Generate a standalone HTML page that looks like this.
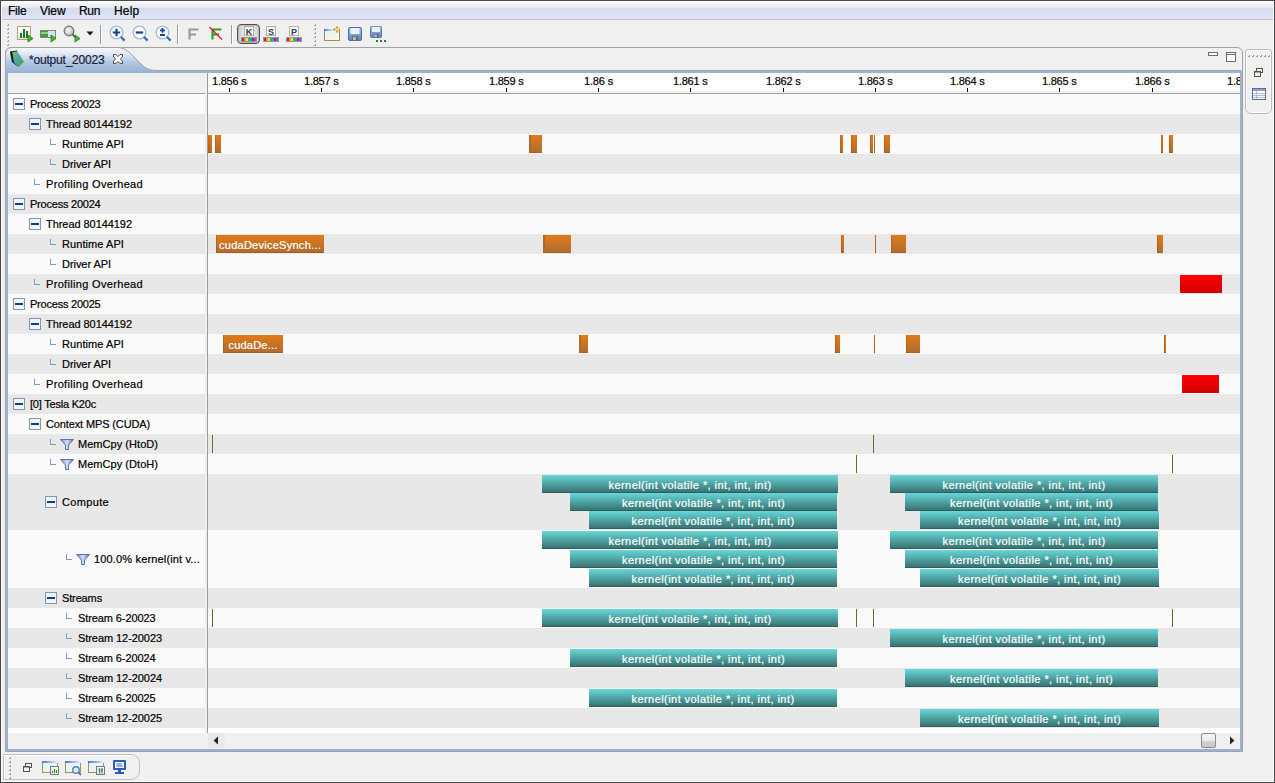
<!DOCTYPE html><html><head><meta charset="utf-8"><style>body{margin:0;width:1275px;height:783px;overflow:hidden;position:relative;font-family:"Liberation Sans",sans-serif}</style></head><body><div style="position:absolute;left:0px;top:0px;width:1275px;height:783px;background:#f0f0f0;"></div><div style="position:absolute;left:1px;top:1px;width:1273px;height:18px;background:linear-gradient(to bottom,#fefefe 0px,#f5f6fa 2px,#e9ecf6 6px,#d6dcee 7.5px,#d8deef 10px,#e0e6f6 18px);"></div><div style="position:absolute;left:1px;top:19px;width:1273px;height:1px;background:#b9c0d4;"></div><div style="position:absolute;left:1px;top:20px;width:1273px;height:1px;background:#f4f4f4;"></div><div style="position:absolute;left:0;top:0;width:1275px;height:783px;box-sizing:border-box;border:1px solid #474747;box-shadow:inset 0 0 0 1px #fcfcfc;pointer-events:none;z-index:50"></div><div style="position:absolute;left:7px;top:24px;width:2px;height:2px;background:linear-gradient(135deg,#fff 0 40%,#a8a8a8 40%)"></div><div style="position:absolute;left:7px;top:28px;width:2px;height:2px;background:linear-gradient(135deg,#fff 0 40%,#a8a8a8 40%)"></div><div style="position:absolute;left:7px;top:32px;width:2px;height:2px;background:linear-gradient(135deg,#fff 0 40%,#a8a8a8 40%)"></div><div style="position:absolute;left:7px;top:36px;width:2px;height:2px;background:linear-gradient(135deg,#fff 0 40%,#a8a8a8 40%)"></div><div style="position:absolute;left:7px;top:40px;width:2px;height:2px;background:linear-gradient(135deg,#fff 0 40%,#a8a8a8 40%)"></div><div style="position:absolute;left:7px;top:44px;width:2px;height:2px;background:linear-gradient(135deg,#fff 0 40%,#a8a8a8 40%)"></div><div style="position:absolute;left:314px;top:24px;width:2px;height:2px;background:linear-gradient(135deg,#fff 0 40%,#a8a8a8 40%)"></div><div style="position:absolute;left:314px;top:28px;width:2px;height:2px;background:linear-gradient(135deg,#fff 0 40%,#a8a8a8 40%)"></div><div style="position:absolute;left:314px;top:32px;width:2px;height:2px;background:linear-gradient(135deg,#fff 0 40%,#a8a8a8 40%)"></div><div style="position:absolute;left:314px;top:36px;width:2px;height:2px;background:linear-gradient(135deg,#fff 0 40%,#a8a8a8 40%)"></div><div style="position:absolute;left:314px;top:40px;width:2px;height:2px;background:linear-gradient(135deg,#fff 0 40%,#a8a8a8 40%)"></div><div style="position:absolute;left:314px;top:44px;width:2px;height:2px;background:linear-gradient(135deg,#fff 0 40%,#a8a8a8 40%)"></div><svg style="position:absolute;left:16px;top:25px" width="20" height="20" viewBox="0 0 20 20"><defs><linearGradient id="gw" x1="0" y1="0" x2="0" y2="1"><stop offset="0" stop-color="#fff"/><stop offset="1" stop-color="#dceaf6"/></linearGradient></defs><rect x="1.5" y="1.5" width="13" height="13" fill="url(#gw)" stroke="#b9a271"/><rect x="4" y="8" width="2" height="5" fill="#1f7a2a"/><rect x="7" y="4" width="2" height="9" fill="#1f7a2a"/><rect x="10" y="6" width="2" height="7" fill="#1f7a2a"/><path d="M12 10v7l5-3.5z" fill="#3fbf2a" stroke="#1f7a10" stroke-width="0.8"/></svg><svg style="position:absolute;left:39px;top:25px" width="20" height="20" viewBox="0 0 20 20"><rect x="1.5" y="5.5" width="15" height="7" fill="#cfe6f5" stroke="#8c8070"/><rect x="2" y="6" width="7" height="6" fill="#3da040"/><rect x="2" y="7" width="7" height="2" fill="#8fd08f"/><path d="M12 10v7l5-3.5z" fill="#3fbf2a" stroke="#1f7a10" stroke-width="0.8"/></svg><svg style="position:absolute;left:63px;top:25px" width="22" height="20" viewBox="0 0 22 20"><defs><radialGradient id="gm" cx="0.4" cy="0.4" r="0.6"><stop offset="0" stop-color="#fafafa"/><stop offset="1" stop-color="#b8b8b8"/></radialGradient></defs><circle cx="6" cy="6" r="4.8" fill="url(#gm)" stroke="#707070" stroke-width="1.2"/><path d="M9.5 9.5l3 3" stroke="#404040" stroke-width="1.6"/><path d="M12 10v7l5-3.5z" fill="#3fbf2a" stroke="#1f7a10" stroke-width="0.8"/></svg><svg style="position:absolute;left:86px;top:31px" width="9" height="6" viewBox="0 0 9 6"><path d="M0.5 0.5h7l-3.5 4z" fill="#1a1a1a"/></svg><div style="position:absolute;left:100px;top:25px;width:1px;height:19px;background:#9a9a9a;"></div><div style="position:absolute;left:101px;top:25px;width:1px;height:19px;background:#fff;"></div><div style="position:absolute;left:177px;top:25px;width:1px;height:19px;background:#9a9a9a;"></div><div style="position:absolute;left:178px;top:25px;width:1px;height:19px;background:#fff;"></div><div style="position:absolute;left:231px;top:25px;width:1px;height:19px;background:#9a9a9a;"></div><div style="position:absolute;left:232px;top:25px;width:1px;height:19px;background:#fff;"></div><svg style="position:absolute;left:109px;top:25px" width="19" height="19" viewBox="0 0 19 19"><circle cx="7.5" cy="7.5" r="6.3" fill="#fff" stroke="#98bce0" stroke-width="1.3"/><path d="M11.8 11.8l3.8 3.8" stroke="#3a6aa8" stroke-width="2.2"/><path d="M3.8 7.5h7.4M7.5 3.8v7.4" stroke="#1c3f8c" stroke-width="2.2"/></svg><svg style="position:absolute;left:132px;top:25px" width="19" height="19" viewBox="0 0 19 19"><circle cx="7.5" cy="7.5" r="6.3" fill="#fff" stroke="#98bce0" stroke-width="1.3"/><path d="M11.8 11.8l3.8 3.8" stroke="#3a6aa8" stroke-width="2.2"/><path d="M3.8 7.5h7.4" stroke="#1c3f8c" stroke-width="2.2"/></svg><svg style="position:absolute;left:155px;top:25px" width="19" height="19" viewBox="0 0 19 19"><circle cx="7.5" cy="7.5" r="6.3" fill="#fff" stroke="#98bce0" stroke-width="1.3"/><path d="M11.8 11.8l3.8 3.8" stroke="#3a6aa8" stroke-width="2.2"/><path d="M5 5.3h5M7.5 2.9v4.8M5 10h5" stroke="#1c3f8c" stroke-width="1.8"/></svg><svg style="position:absolute;left:187px;top:26px" width="14" height="16" viewBox="0 0 14 16"><path d="M2.5 13.5V3.5h9M2.5 8.5h6.5" stroke="#9a9a9a" stroke-width="2.1" fill="none"/></svg><svg style="position:absolute;left:208px;top:25px" width="16" height="17" viewBox="0 0 16 17"><path d="M4.5 14.5V4.5h9M4.5 9.5h6.5" stroke="#2f9a2f" stroke-width="2.1" fill="none"/><path d="M1.5 2l12.5 12.5" stroke="#e81818" stroke-width="1.3"/></svg><div style="position:absolute;left:237px;top:24px;width:21px;height:18px;border:1px solid #505050;border-radius:4px;background:linear-gradient(90deg,#c8c8c8,#e8e8e8 30%,#e8e8e8 70%,#d0d0d0);box-shadow:inset 0 0 0 1px #b8b8b8"></div><svg style="position:absolute;left:240px;top:25px" width="18" height="18" viewBox="0 0 18 18"><rect x="4.5" y="1.5" width="9" height="9" fill="#f6f9fd" stroke="#c4b07a"/><text x="9" y="9.5" text-anchor="middle" font-family="Liberation Sans" font-weight="bold" font-size="9" fill="#1c3a8a">K</text><rect x="1" y="12" width="16" height="5" fill="#8a96b4"/><rect x="2" y="13" width="2" height="3" fill="#e8151b"/><rect x="4" y="13" width="2" height="3" fill="#f7941d"/><rect x="6" y="13" width="2" height="3" fill="#fff200"/><rect x="8" y="13" width="2" height="3" fill="#39b54a"/><rect x="10" y="13" width="2" height="3" fill="#00aeef"/><rect x="12" y="13" width="2" height="3" fill="#d0106a"/><rect x="14" y="13" width="2" height="3" fill="#8e5cb0"/></svg><svg style="position:absolute;left:262px;top:25px" width="18" height="18" viewBox="0 0 18 18"><rect x="4.5" y="1.5" width="9" height="9" fill="#f6f9fd" stroke="#c4b07a"/><text x="9" y="9.5" text-anchor="middle" font-family="Liberation Sans" font-weight="bold" font-size="9" fill="#1c3a8a">S</text><rect x="1" y="12" width="16" height="5" fill="#8a96b4"/><rect x="2" y="13" width="2" height="3" fill="#e8151b"/><rect x="4" y="13" width="2" height="3" fill="#f7941d"/><rect x="6" y="13" width="2" height="3" fill="#fff200"/><rect x="8" y="13" width="2" height="3" fill="#39b54a"/><rect x="10" y="13" width="2" height="3" fill="#00aeef"/><rect x="12" y="13" width="2" height="3" fill="#d0106a"/><rect x="14" y="13" width="2" height="3" fill="#8e5cb0"/></svg><svg style="position:absolute;left:285px;top:25px" width="18" height="18" viewBox="0 0 18 18"><rect x="4.5" y="1.5" width="9" height="9" fill="#f6f9fd" stroke="#c4b07a"/><text x="9" y="9.5" text-anchor="middle" font-family="Liberation Sans" font-weight="bold" font-size="9" fill="#1c3a8a">P</text><rect x="1" y="12" width="16" height="5" fill="#8a96b4"/><rect x="2" y="13" width="2" height="3" fill="#e8151b"/><rect x="4" y="13" width="2" height="3" fill="#f7941d"/><rect x="6" y="13" width="2" height="3" fill="#fff200"/><rect x="8" y="13" width="2" height="3" fill="#39b54a"/><rect x="10" y="13" width="2" height="3" fill="#00aeef"/><rect x="12" y="13" width="2" height="3" fill="#d0106a"/><rect x="14" y="13" width="2" height="3" fill="#8e5cb0"/></svg><svg style="position:absolute;left:323px;top:25px" width="20" height="18" viewBox="0 0 20 18"><defs><linearGradient id="gnw" x1="0" y1="0" x2="1" y2="1"><stop offset="0" stop-color="#dff0fb"/><stop offset="1" stop-color="#fffbe0"/></linearGradient><linearGradient id="gbt" x1="0" y1="0" x2="1" y2="0"><stop offset="0" stop-color="#3a7bd0"/><stop offset="1" stop-color="#e0ecf8"/></linearGradient></defs><rect x="1.5" y="4.5" width="15" height="11" fill="url(#gnw)" stroke="#a08a50"/><rect x="1" y="4" width="9" height="2" fill="url(#gbt)"/><path d="M14 1.5v6M11 4.5h6" stroke="#c09020" stroke-width="2"/><path d="M14 2.5v4M12 4.5h4" stroke="#fff2b0" stroke-width="0.9"/></svg><svg style="position:absolute;left:348px;top:27px" width="14" height="14" viewBox="0 0 14 14"><defs><linearGradient id="gsv" x1="0" y1="0" x2="0" y2="1"><stop offset="0" stop-color="#a9c2e6"/><stop offset="1" stop-color="#5a82c0"/></linearGradient></defs><rect x="0.5" y="0.5" width="13" height="13" rx="1.5" fill="url(#gsv)" stroke="#4a6eae"/><rect x="2.5" y="1" width="9" height="6" fill="#eef3fb"/><rect x="4" y="9" width="6" height="5" fill="#5d6f8c"/><rect x="5" y="10" width="3" height="3" fill="#c8b88a"/></svg><svg style="position:absolute;left:370px;top:26px" width="12" height="12" viewBox="0 0 14 14"><defs><linearGradient id="gsv" x1="0" y1="0" x2="0" y2="1"><stop offset="0" stop-color="#a9c2e6"/><stop offset="1" stop-color="#5a82c0"/></linearGradient></defs><rect x="0.5" y="0.5" width="13" height="13" rx="1.5" fill="url(#gsv)" stroke="#4a6eae"/><rect x="2.5" y="1" width="9" height="6" fill="#eef3fb"/><rect x="4" y="9" width="6" height="5" fill="#5d6f8c"/><rect x="5" y="10" width="3" height="3" fill="#c8b88a"/></svg><div style="position:absolute;left:376px;top:40px;width:2px;height:2px;background:#118a11;"></div><div style="position:absolute;left:380px;top:40px;width:2px;height:2px;background:#118a11;"></div><div style="position:absolute;left:384px;top:40px;width:2px;height:2px;background:#118a11;"></div><div style="position:absolute;left:5px;top:47px;width:1236px;height:703px;border:1px solid #a3a3a3;border-radius:6px 6px 0 0;background:#f0f0f0"></div><svg style="position:absolute;left:5px;top:47px" width="160" height="26" viewBox="0 0 160 26"><defs><linearGradient id="gtab" x1="0" y1="0" x2="0" y2="1"><stop offset="0" stop-color="#f6f8fc"/><stop offset="0.25" stop-color="#dfe8f3"/><stop offset="0.6" stop-color="#b0c6e0"/><stop offset="1" stop-color="#98b3d6"/></linearGradient></defs><path d="M0.5 26V7.5Q0.5 0.5 7.5 0.5H114Q119 0.5 124 5L136 17Q142 23.5 151 23.5H160V26Z" fill="url(#gtab)" stroke="#a3a3a3" stroke-width="1"/></svg><div style="position:absolute;left:160px;top:70px;width:1081px;height:1px;background:#a3a3a3;"></div><div style="position:absolute;left:6px;top:71px;width:1235px;height:2px;background:#98b3d6;"></div><div style="position:absolute;left:6px;top:71px;width:2px;height:680px;background:#98b3d6;"></div><div style="position:absolute;left:1240px;top:71px;width:2px;height:680px;background:#98b3d6;"></div><div style="position:absolute;left:6px;top:749px;width:1235px;height:2px;background:#98b3d6;"></div><svg style="position:absolute;left:8px;top:49px" width="18" height="20" viewBox="0 0 18 20"><defs><linearGradient id="gti" x1="0" y1="0" x2="1" y2="1"><stop offset="0" stop-color="#9ab83a"/><stop offset="0.5" stop-color="#4aa8b8"/><stop offset="1" stop-color="#5a9a20"/></linearGradient></defs><path d="M2 3L9 2L16 13L10.5 18L4 13Z" fill="url(#gti)"/><path d="M2 3L4 2.5L6 13.5L10.5 18L4 13Z" fill="#0a1a20"/><path d="M2 3L9 2" stroke="#203028" stroke-width="1"/></svg><svg style="position:absolute;left:112px;top:53px" width="12" height="12" viewBox="0 0 12 12"><path d="M1.5 1.5H4L6 3.6L8 1.5H10.5V4L8.4 6L10.5 8V10.5H8L6 8.4L4 10.5H1.5V8L3.6 6L1.5 4Z" fill="#fff" stroke="#4a4a4a" stroke-width="1"/></svg><div style="position:absolute;left:1208px;top:52px;width:8px;height:2px;border:1px solid #6e6e6e;background:#fff"></div><div style="position:absolute;left:1226px;top:52px;width:8px;height:8px;border:1px solid #6e6e6e;background:#fff"></div><div style="position:absolute;left:1227px;top:54px;width:8px;height:1px;background:#6e6e6e;"></div><div style="position:absolute;left:1245px;top:49px;width:25px;height:63px;border:1px solid #bcbcbc;border-radius:3px 3px 6px 6px;box-shadow:inset 0 0 0 1px #fcfcfc"></div><div style="position:absolute;left:1248px;top:55px;width:2px;height:2px;background:linear-gradient(135deg,transparent 0 45%,#a0a0a0 45%)"></div><div style="position:absolute;left:1252px;top:55px;width:2px;height:2px;background:linear-gradient(135deg,transparent 0 45%,#a0a0a0 45%)"></div><div style="position:absolute;left:1256px;top:55px;width:2px;height:2px;background:linear-gradient(135deg,transparent 0 45%,#a0a0a0 45%)"></div><div style="position:absolute;left:1260px;top:55px;width:2px;height:2px;background:linear-gradient(135deg,transparent 0 45%,#a0a0a0 45%)"></div><div style="position:absolute;left:1264px;top:55px;width:2px;height:2px;background:linear-gradient(135deg,transparent 0 45%,#a0a0a0 45%)"></div><div style="position:absolute;left:1268px;top:55px;width:2px;height:2px;background:linear-gradient(135deg,transparent 0 45%,#a0a0a0 45%)"></div><svg style="position:absolute;left:1254px;top:68px" width="9" height="9" viewBox="0 0 9 9"><rect x="2.5" y="0.5" width="6" height="4" fill="#f0f0f0" stroke="#5a5046"/><rect x="0.5" y="3.5" width="6" height="5" fill="#f0f0f0" stroke="#5a5046" stroke-width="1"/><path d="M1 4h5" stroke="#5a5046" stroke-width="1"/></svg><svg style="position:absolute;left:1252px;top:88px" width="14" height="12" viewBox="0 0 14 12"><rect x="0.5" y="0.5" width="13" height="11" fill="#fff" stroke="#5a6e96"/><rect x="1" y="1" width="12" height="2" fill="#8ea2c4"/><path d="M1 5.5h12M1 7.5h12M1 9.5h12M4.5 3v8" stroke="#b0bdd6" stroke-width="1"/></svg><div style="position:absolute;left:8px;top:73px;width:197px;height:20px;background:#f0f0f0;"></div><div style="position:absolute;left:205px;top:73px;width:2px;height:660px;background:#f0f0f0;"></div><div style="position:absolute;left:207px;top:73px;width:1px;height:660px;background:#9c9c9c;"></div><div style="position:absolute;left:208px;top:73px;width:1032px;height:19px;background:#fff;"></div><div style="position:absolute;left:208px;top:91px;width:1032px;height:1px;background:#f0f0f0;"></div><div style="position:absolute;left:8px;top:93px;width:197px;height:1px;background:#a0a0a0;"></div><div style="position:absolute;left:208px;top:93px;width:1032px;height:1px;background:#a0a0a0;"></div><div style="position:absolute;left:229px;top:88px;width:1px;height:4px;background:#000;"></div><div style="position:absolute;left:321px;top:88px;width:1px;height:4px;background:#000;"></div><div style="position:absolute;left:413px;top:88px;width:1px;height:4px;background:#000;"></div><div style="position:absolute;left:506px;top:88px;width:1px;height:4px;background:#000;"></div><div style="position:absolute;left:598px;top:88px;width:1px;height:4px;background:#000;"></div><div style="position:absolute;left:690px;top:88px;width:1px;height:4px;background:#000;"></div><div style="position:absolute;left:783px;top:88px;width:1px;height:4px;background:#000;"></div><div style="position:absolute;left:875px;top:88px;width:1px;height:4px;background:#000;"></div><div style="position:absolute;left:967px;top:88px;width:1px;height:4px;background:#000;"></div><div style="position:absolute;left:1059px;top:88px;width:1px;height:4px;background:#000;"></div><div style="position:absolute;left:1152px;top:88px;width:1px;height:4px;background:#000;"></div><div style="position:absolute;left:8px;top:94px;width:197px;height:20px;background:#fafafa;"></div><div style="position:absolute;left:208px;top:94px;width:1032px;height:20px;background:#fafafa;"></div><div style="position:absolute;left:13px;top:98px;width:10px;height:10px;border:1px solid #8794ac;background:#eaf9fe"></div><div style="position:absolute;left:15px;top:103px;width:8px;height:2px;background:#1f3b88;"></div><div style="position:absolute;left:8px;top:114px;width:197px;height:20px;background:#e8e8e8;"></div><div style="position:absolute;left:208px;top:114px;width:1032px;height:20px;background:#e8e8e8;"></div><div style="position:absolute;left:29px;top:118px;width:10px;height:10px;border:1px solid #8794ac;background:#eaf9fe"></div><div style="position:absolute;left:31px;top:123px;width:8px;height:2px;background:#1f3b88;"></div><div style="position:absolute;left:8px;top:134px;width:197px;height:20px;background:#fafafa;"></div><div style="position:absolute;left:208px;top:134px;width:1032px;height:20px;background:#fafafa;"></div><div style="position:absolute;left:50px;top:139px;width:1px;height:6px;background:#8a9ab4;"></div><div style="position:absolute;left:51px;top:144px;width:5px;height:1px;background:#8a9ab4;"></div><div style="position:absolute;left:8px;top:154px;width:197px;height:20px;background:#e8e8e8;"></div><div style="position:absolute;left:208px;top:154px;width:1032px;height:20px;background:#e8e8e8;"></div><div style="position:absolute;left:50px;top:159px;width:1px;height:6px;background:#8a9ab4;"></div><div style="position:absolute;left:51px;top:164px;width:5px;height:1px;background:#8a9ab4;"></div><div style="position:absolute;left:8px;top:174px;width:197px;height:20px;background:#fafafa;"></div><div style="position:absolute;left:208px;top:174px;width:1032px;height:20px;background:#fafafa;"></div><div style="position:absolute;left:34px;top:179px;width:1px;height:6px;background:#8a9ab4;"></div><div style="position:absolute;left:35px;top:184px;width:5px;height:1px;background:#8a9ab4;"></div><div style="position:absolute;left:8px;top:194px;width:197px;height:20px;background:#e8e8e8;"></div><div style="position:absolute;left:208px;top:194px;width:1032px;height:20px;background:#e8e8e8;"></div><div style="position:absolute;left:13px;top:198px;width:10px;height:10px;border:1px solid #8794ac;background:#eaf9fe"></div><div style="position:absolute;left:15px;top:203px;width:8px;height:2px;background:#1f3b88;"></div><div style="position:absolute;left:8px;top:214px;width:197px;height:20px;background:#fafafa;"></div><div style="position:absolute;left:208px;top:214px;width:1032px;height:20px;background:#fafafa;"></div><div style="position:absolute;left:29px;top:218px;width:10px;height:10px;border:1px solid #8794ac;background:#eaf9fe"></div><div style="position:absolute;left:31px;top:223px;width:8px;height:2px;background:#1f3b88;"></div><div style="position:absolute;left:8px;top:234px;width:197px;height:20px;background:#e8e8e8;"></div><div style="position:absolute;left:208px;top:234px;width:1032px;height:20px;background:#e8e8e8;"></div><div style="position:absolute;left:50px;top:239px;width:1px;height:6px;background:#8a9ab4;"></div><div style="position:absolute;left:51px;top:244px;width:5px;height:1px;background:#8a9ab4;"></div><div style="position:absolute;left:8px;top:254px;width:197px;height:20px;background:#fafafa;"></div><div style="position:absolute;left:208px;top:254px;width:1032px;height:20px;background:#fafafa;"></div><div style="position:absolute;left:50px;top:259px;width:1px;height:6px;background:#8a9ab4;"></div><div style="position:absolute;left:51px;top:264px;width:5px;height:1px;background:#8a9ab4;"></div><div style="position:absolute;left:8px;top:274px;width:197px;height:20px;background:#e8e8e8;"></div><div style="position:absolute;left:208px;top:274px;width:1032px;height:20px;background:#e8e8e8;"></div><div style="position:absolute;left:34px;top:279px;width:1px;height:6px;background:#8a9ab4;"></div><div style="position:absolute;left:35px;top:284px;width:5px;height:1px;background:#8a9ab4;"></div><div style="position:absolute;left:8px;top:294px;width:197px;height:20px;background:#fafafa;"></div><div style="position:absolute;left:208px;top:294px;width:1032px;height:20px;background:#fafafa;"></div><div style="position:absolute;left:13px;top:298px;width:10px;height:10px;border:1px solid #8794ac;background:#eaf9fe"></div><div style="position:absolute;left:15px;top:303px;width:8px;height:2px;background:#1f3b88;"></div><div style="position:absolute;left:8px;top:314px;width:197px;height:20px;background:#e8e8e8;"></div><div style="position:absolute;left:208px;top:314px;width:1032px;height:20px;background:#e8e8e8;"></div><div style="position:absolute;left:29px;top:318px;width:10px;height:10px;border:1px solid #8794ac;background:#eaf9fe"></div><div style="position:absolute;left:31px;top:323px;width:8px;height:2px;background:#1f3b88;"></div><div style="position:absolute;left:8px;top:334px;width:197px;height:20px;background:#fafafa;"></div><div style="position:absolute;left:208px;top:334px;width:1032px;height:20px;background:#fafafa;"></div><div style="position:absolute;left:50px;top:339px;width:1px;height:6px;background:#8a9ab4;"></div><div style="position:absolute;left:51px;top:344px;width:5px;height:1px;background:#8a9ab4;"></div><div style="position:absolute;left:8px;top:354px;width:197px;height:20px;background:#e8e8e8;"></div><div style="position:absolute;left:208px;top:354px;width:1032px;height:20px;background:#e8e8e8;"></div><div style="position:absolute;left:50px;top:359px;width:1px;height:6px;background:#8a9ab4;"></div><div style="position:absolute;left:51px;top:364px;width:5px;height:1px;background:#8a9ab4;"></div><div style="position:absolute;left:8px;top:374px;width:197px;height:20px;background:#fafafa;"></div><div style="position:absolute;left:208px;top:374px;width:1032px;height:20px;background:#fafafa;"></div><div style="position:absolute;left:34px;top:379px;width:1px;height:6px;background:#8a9ab4;"></div><div style="position:absolute;left:35px;top:384px;width:5px;height:1px;background:#8a9ab4;"></div><div style="position:absolute;left:8px;top:394px;width:197px;height:20px;background:#e8e8e8;"></div><div style="position:absolute;left:208px;top:394px;width:1032px;height:20px;background:#e8e8e8;"></div><div style="position:absolute;left:13px;top:398px;width:10px;height:10px;border:1px solid #8794ac;background:#eaf9fe"></div><div style="position:absolute;left:15px;top:403px;width:8px;height:2px;background:#1f3b88;"></div><div style="position:absolute;left:8px;top:414px;width:197px;height:20px;background:#fafafa;"></div><div style="position:absolute;left:208px;top:414px;width:1032px;height:20px;background:#fafafa;"></div><div style="position:absolute;left:29px;top:418px;width:10px;height:10px;border:1px solid #8794ac;background:#eaf9fe"></div><div style="position:absolute;left:31px;top:423px;width:8px;height:2px;background:#1f3b88;"></div><div style="position:absolute;left:8px;top:434px;width:197px;height:20px;background:#e8e8e8;"></div><div style="position:absolute;left:208px;top:434px;width:1032px;height:20px;background:#e8e8e8;"></div><div style="position:absolute;left:50px;top:439px;width:1px;height:6px;background:#8a9ab4;"></div><div style="position:absolute;left:51px;top:444px;width:5px;height:1px;background:#8a9ab4;"></div><svg style="position:absolute;left:60px;top:439px" width="14" height="11" viewBox="0 0 14 11"><defs><linearGradient id="gf" x1="0" y1="0" x2="1" y2="0"><stop offset="0" stop-color="#6a88c0"/><stop offset="0.5" stop-color="#d4e0f4"/><stop offset="1" stop-color="#5070b0"/></linearGradient></defs><path d="M0.5 0.5H13.5L8.5 6V10.5H5.5V6Z" fill="url(#gf)" stroke="#5874a8" stroke-width="1"/></svg><div style="position:absolute;left:8px;top:454px;width:197px;height:20px;background:#fafafa;"></div><div style="position:absolute;left:208px;top:454px;width:1032px;height:20px;background:#fafafa;"></div><div style="position:absolute;left:50px;top:459px;width:1px;height:6px;background:#8a9ab4;"></div><div style="position:absolute;left:51px;top:464px;width:5px;height:1px;background:#8a9ab4;"></div><svg style="position:absolute;left:60px;top:459px" width="14" height="11" viewBox="0 0 14 11"><defs><linearGradient id="gf" x1="0" y1="0" x2="1" y2="0"><stop offset="0" stop-color="#6a88c0"/><stop offset="0.5" stop-color="#d4e0f4"/><stop offset="1" stop-color="#5070b0"/></linearGradient></defs><path d="M0.5 0.5H13.5L8.5 6V10.5H5.5V6Z" fill="url(#gf)" stroke="#5874a8" stroke-width="1"/></svg><div style="position:absolute;left:8px;top:474px;width:197px;height:56px;background:#e8e8e8;"></div><div style="position:absolute;left:208px;top:474px;width:1032px;height:56px;background:#e8e8e8;"></div><div style="position:absolute;left:45px;top:496px;width:10px;height:10px;border:1px solid #8794ac;background:#eaf9fe"></div><div style="position:absolute;left:47px;top:501px;width:8px;height:2px;background:#1f3b88;"></div><div style="position:absolute;left:8px;top:530px;width:197px;height:58px;background:#fafafa;"></div><div style="position:absolute;left:208px;top:530px;width:1032px;height:58px;background:#fafafa;"></div><div style="position:absolute;left:66px;top:554px;width:1px;height:6px;background:#8a9ab4;"></div><div style="position:absolute;left:67px;top:559px;width:5px;height:1px;background:#8a9ab4;"></div><svg style="position:absolute;left:76px;top:554px" width="14" height="11" viewBox="0 0 14 11"><defs><linearGradient id="gf" x1="0" y1="0" x2="1" y2="0"><stop offset="0" stop-color="#6a88c0"/><stop offset="0.5" stop-color="#d4e0f4"/><stop offset="1" stop-color="#5070b0"/></linearGradient></defs><path d="M0.5 0.5H13.5L8.5 6V10.5H5.5V6Z" fill="url(#gf)" stroke="#5874a8" stroke-width="1"/></svg><div style="position:absolute;left:8px;top:588px;width:197px;height:20px;background:#e8e8e8;"></div><div style="position:absolute;left:208px;top:588px;width:1032px;height:20px;background:#e8e8e8;"></div><div style="position:absolute;left:45px;top:592px;width:10px;height:10px;border:1px solid #8794ac;background:#eaf9fe"></div><div style="position:absolute;left:47px;top:597px;width:8px;height:2px;background:#1f3b88;"></div><div style="position:absolute;left:8px;top:608px;width:197px;height:20px;background:#fafafa;"></div><div style="position:absolute;left:208px;top:608px;width:1032px;height:20px;background:#fafafa;"></div><div style="position:absolute;left:66px;top:613px;width:1px;height:6px;background:#8a9ab4;"></div><div style="position:absolute;left:67px;top:618px;width:5px;height:1px;background:#8a9ab4;"></div><div style="position:absolute;left:8px;top:628px;width:197px;height:20px;background:#e8e8e8;"></div><div style="position:absolute;left:208px;top:628px;width:1032px;height:20px;background:#e8e8e8;"></div><div style="position:absolute;left:66px;top:633px;width:1px;height:6px;background:#8a9ab4;"></div><div style="position:absolute;left:67px;top:638px;width:5px;height:1px;background:#8a9ab4;"></div><div style="position:absolute;left:8px;top:648px;width:197px;height:20px;background:#fafafa;"></div><div style="position:absolute;left:208px;top:648px;width:1032px;height:20px;background:#fafafa;"></div><div style="position:absolute;left:66px;top:653px;width:1px;height:6px;background:#8a9ab4;"></div><div style="position:absolute;left:67px;top:658px;width:5px;height:1px;background:#8a9ab4;"></div><div style="position:absolute;left:8px;top:668px;width:197px;height:20px;background:#e8e8e8;"></div><div style="position:absolute;left:208px;top:668px;width:1032px;height:20px;background:#e8e8e8;"></div><div style="position:absolute;left:66px;top:673px;width:1px;height:6px;background:#8a9ab4;"></div><div style="position:absolute;left:67px;top:678px;width:5px;height:1px;background:#8a9ab4;"></div><div style="position:absolute;left:8px;top:688px;width:197px;height:20px;background:#fafafa;"></div><div style="position:absolute;left:208px;top:688px;width:1032px;height:20px;background:#fafafa;"></div><div style="position:absolute;left:66px;top:693px;width:1px;height:6px;background:#8a9ab4;"></div><div style="position:absolute;left:67px;top:698px;width:5px;height:1px;background:#8a9ab4;"></div><div style="position:absolute;left:8px;top:708px;width:197px;height:20px;background:#e8e8e8;"></div><div style="position:absolute;left:208px;top:708px;width:1032px;height:20px;background:#e8e8e8;"></div><div style="position:absolute;left:66px;top:713px;width:1px;height:6px;background:#8a9ab4;"></div><div style="position:absolute;left:67px;top:718px;width:5px;height:1px;background:#8a9ab4;"></div><div style="position:absolute;left:8px;top:728px;width:197px;height:5px;background:#fff;"></div><div style="position:absolute;left:208px;top:728px;width:1032px;height:5px;background:#fff;"></div><div style="position:absolute;left:8px;top:733px;width:1232px;height:16px;background:#f0f0f0;"></div><div style="position:absolute;left:208px;top:733px;width:17px;height:15px;background:#eaeaea;"></div><svg style="position:absolute;left:212px;top:736px" width="8" height="9" viewBox="0 0 8 9"><path d="M6 0.5L1.5 4.5L6 8.5z" fill="#222"/></svg><div style="position:absolute;left:1201px;top:733px;width:13px;height:13px;border:1px solid #8c8c8c;border-radius:2px;background:linear-gradient(#f6f6f6 0,#ececec 50%,#d6d6d6 50%,#c8c8c8 100%)"></div><svg style="position:absolute;left:1228px;top:736px" width="8" height="9" viewBox="0 0 8 9"><path d="M2 0.5L6.5 4.5L2 8.5z" fill="#222"/></svg><div style="position:absolute;left:208px;top:135px;width:4px;height:18px;background:linear-gradient(to bottom,#e27a17,#ad6c33);box-shadow:inset 1px 0 0 rgba(150,70,0,.3),inset -1px 0 0 rgba(230,110,0,.25),inset 0 -1px 0 rgba(150,70,0,.35);overflow:hidden"></div><div style="position:absolute;left:215px;top:135px;width:6px;height:18px;background:linear-gradient(to bottom,#e27a17,#ad6c33);box-shadow:inset 1px 0 0 rgba(150,70,0,.3),inset -1px 0 0 rgba(230,110,0,.25),inset 0 -1px 0 rgba(150,70,0,.35);overflow:hidden"></div><div style="position:absolute;left:529px;top:135px;width:13px;height:18px;background:linear-gradient(to bottom,#e27a17,#ad6c33);box-shadow:inset 1px 0 0 rgba(150,70,0,.3),inset -1px 0 0 rgba(230,110,0,.25),inset 0 -1px 0 rgba(150,70,0,.35);overflow:hidden"></div><div style="position:absolute;left:529px;top:135px;width:2px;height:18px;background:linear-gradient(#b06a28,#a86a30)"></div><div style="position:absolute;left:840px;top:135px;width:3px;height:18px;background:linear-gradient(to bottom,#e27a17,#ad6c33);box-shadow:inset 1px 0 0 rgba(150,70,0,.3),inset -1px 0 0 rgba(230,110,0,.25),inset 0 -1px 0 rgba(150,70,0,.35);overflow:hidden"></div><div style="position:absolute;left:851px;top:135px;width:6px;height:18px;background:linear-gradient(to bottom,#e27a17,#ad6c33);box-shadow:inset 1px 0 0 rgba(150,70,0,.3),inset -1px 0 0 rgba(230,110,0,.25),inset 0 -1px 0 rgba(150,70,0,.35);overflow:hidden"></div><div style="position:absolute;left:870px;top:135px;width:3px;height:18px;background:linear-gradient(to bottom,#e27a17,#ad6c33);box-shadow:inset 1px 0 0 rgba(150,70,0,.3),inset -1px 0 0 rgba(230,110,0,.25),inset 0 -1px 0 rgba(150,70,0,.35);overflow:hidden"></div><div style="position:absolute;left:874px;top:135px;width:1px;height:18px;background:linear-gradient(to bottom,#e27a17,#ad6c33);box-shadow:inset 1px 0 0 rgba(150,70,0,.3),inset -1px 0 0 rgba(230,110,0,.25),inset 0 -1px 0 rgba(150,70,0,.35);overflow:hidden"></div><div style="position:absolute;left:884px;top:135px;width:6px;height:18px;background:linear-gradient(to bottom,#e27a17,#ad6c33);box-shadow:inset 1px 0 0 rgba(150,70,0,.3),inset -1px 0 0 rgba(230,110,0,.25),inset 0 -1px 0 rgba(150,70,0,.35);overflow:hidden"></div><div style="position:absolute;left:1161px;top:135px;width:2px;height:18px;background:linear-gradient(to bottom,#e27a17,#ad6c33);box-shadow:inset 1px 0 0 rgba(150,70,0,.3),inset -1px 0 0 rgba(230,110,0,.25),inset 0 -1px 0 rgba(150,70,0,.35);overflow:hidden"></div><div style="position:absolute;left:1169px;top:135px;width:4px;height:18px;background:linear-gradient(to bottom,#e27a17,#ad6c33);box-shadow:inset 1px 0 0 rgba(150,70,0,.3),inset -1px 0 0 rgba(230,110,0,.25),inset 0 -1px 0 rgba(150,70,0,.35);overflow:hidden"></div><div style="position:absolute;left:216px;top:235px;width:108px;height:18px;background:linear-gradient(to bottom,#e27a17,#ad6c33);box-shadow:inset 1px 0 0 rgba(150,70,0,.3),inset -1px 0 0 rgba(230,110,0,.25),inset 0 -1px 0 rgba(150,70,0,.35);overflow:hidden"></div><div style="position:absolute;left:543px;top:235px;width:28px;height:18px;background:linear-gradient(to bottom,#e27a17,#ad6c33);box-shadow:inset 1px 0 0 rgba(150,70,0,.3),inset -1px 0 0 rgba(230,110,0,.25),inset 0 -1px 0 rgba(150,70,0,.35);overflow:hidden"></div><div style="position:absolute;left:543px;top:235px;width:2px;height:18px;background:linear-gradient(#b06a28,#a86a30)"></div><div style="position:absolute;left:841px;top:235px;width:3px;height:18px;background:linear-gradient(to bottom,#e27a17,#ad6c33);box-shadow:inset 1px 0 0 rgba(150,70,0,.3),inset -1px 0 0 rgba(230,110,0,.25),inset 0 -1px 0 rgba(150,70,0,.35);overflow:hidden"></div><div style="position:absolute;left:875px;top:235px;width:1px;height:18px;background:linear-gradient(to bottom,#e27a17,#ad6c33);box-shadow:inset 1px 0 0 rgba(150,70,0,.3),inset -1px 0 0 rgba(230,110,0,.25),inset 0 -1px 0 rgba(150,70,0,.35);overflow:hidden"></div><div style="position:absolute;left:891px;top:235px;width:15px;height:18px;background:linear-gradient(to bottom,#e27a17,#ad6c33);box-shadow:inset 1px 0 0 rgba(150,70,0,.3),inset -1px 0 0 rgba(230,110,0,.25),inset 0 -1px 0 rgba(150,70,0,.35);overflow:hidden"></div><div style="position:absolute;left:1157px;top:235px;width:6px;height:18px;background:linear-gradient(to bottom,#e27a17,#ad6c33);box-shadow:inset 1px 0 0 rgba(150,70,0,.3),inset -1px 0 0 rgba(230,110,0,.25),inset 0 -1px 0 rgba(150,70,0,.35);overflow:hidden"></div><div style="position:absolute;left:1180px;top:275px;width:42px;height:18px;background:linear-gradient(to bottom,#ff0000,#d00000);overflow:hidden"></div><div style="position:absolute;left:223px;top:335px;width:60px;height:18px;background:linear-gradient(to bottom,#e27a17,#ad6c33);box-shadow:inset 1px 0 0 rgba(150,70,0,.3),inset -1px 0 0 rgba(230,110,0,.25),inset 0 -1px 0 rgba(150,70,0,.35);overflow:hidden"></div><div style="position:absolute;left:579px;top:335px;width:9px;height:18px;background:linear-gradient(to bottom,#e27a17,#ad6c33);box-shadow:inset 1px 0 0 rgba(150,70,0,.3),inset -1px 0 0 rgba(230,110,0,.25),inset 0 -1px 0 rgba(150,70,0,.35);overflow:hidden"></div><div style="position:absolute;left:579px;top:335px;width:2px;height:18px;background:linear-gradient(#b06a28,#a86a30)"></div><div style="position:absolute;left:835px;top:335px;width:5px;height:18px;background:linear-gradient(to bottom,#e27a17,#ad6c33);box-shadow:inset 1px 0 0 rgba(150,70,0,.3),inset -1px 0 0 rgba(230,110,0,.25),inset 0 -1px 0 rgba(150,70,0,.35);overflow:hidden"></div><div style="position:absolute;left:874px;top:335px;width:1px;height:18px;background:linear-gradient(to bottom,#e27a17,#ad6c33);box-shadow:inset 1px 0 0 rgba(150,70,0,.3),inset -1px 0 0 rgba(230,110,0,.25),inset 0 -1px 0 rgba(150,70,0,.35);overflow:hidden"></div><div style="position:absolute;left:906px;top:335px;width:14px;height:18px;background:linear-gradient(to bottom,#e27a17,#ad6c33);box-shadow:inset 1px 0 0 rgba(150,70,0,.3),inset -1px 0 0 rgba(230,110,0,.25),inset 0 -1px 0 rgba(150,70,0,.35);overflow:hidden"></div><div style="position:absolute;left:1164px;top:335px;width:2px;height:18px;background:linear-gradient(to bottom,#e27a17,#ad6c33);box-shadow:inset 1px 0 0 rgba(150,70,0,.3),inset -1px 0 0 rgba(230,110,0,.25),inset 0 -1px 0 rgba(150,70,0,.35);overflow:hidden"></div><div style="position:absolute;left:1182px;top:375px;width:37px;height:18px;background:linear-gradient(to bottom,#ff0000,#d00000);overflow:hidden"></div><div style="position:absolute;left:212px;top:435px;width:1px;height:18px;background:#7b6324;"></div><div style="position:absolute;left:873px;top:435px;width:1px;height:18px;background:#7b6324;"></div><div style="position:absolute;left:856px;top:455px;width:1px;height:18px;background:#7b6324;"></div><div style="position:absolute;left:1172px;top:455px;width:1px;height:18px;background:#7b6324;"></div><div style="position:absolute;left:212px;top:609px;width:1px;height:18px;background:#7b6324;"></div><div style="position:absolute;left:856px;top:609px;width:1px;height:18px;background:#7b6324;"></div><div style="position:absolute;left:873px;top:609px;width:1px;height:18px;background:#7b6324;"></div><div style="position:absolute;left:1172px;top:609px;width:1px;height:18px;background:#7b6324;"></div><div style="position:absolute;left:542px;top:475px;width:296px;height:18px;background:linear-gradient(to bottom,#66d8d8,#3b7373 94%,#2f5f5f 94%);overflow:hidden"></div><div style="position:absolute;left:570px;top:493px;width:267px;height:18px;background:linear-gradient(to bottom,#66d8d8,#3b7373 94%,#2f5f5f 94%);overflow:hidden"></div><div style="position:absolute;left:589px;top:511px;width:248px;height:18px;background:linear-gradient(to bottom,#66d8d8,#3b7373 94%,#2f5f5f 94%);overflow:hidden"></div><div style="position:absolute;left:890px;top:475px;width:268px;height:18px;background:linear-gradient(to bottom,#66d8d8,#3b7373 94%,#2f5f5f 94%);overflow:hidden"></div><div style="position:absolute;left:905px;top:493px;width:253px;height:18px;background:linear-gradient(to bottom,#66d8d8,#3b7373 94%,#2f5f5f 94%);overflow:hidden"></div><div style="position:absolute;left:920px;top:511px;width:239px;height:18px;background:linear-gradient(to bottom,#66d8d8,#3b7373 94%,#2f5f5f 94%);overflow:hidden"></div><div style="position:absolute;left:542px;top:531px;width:296px;height:18px;background:linear-gradient(to bottom,#66d8d8,#3b7373 94%,#2f5f5f 94%);overflow:hidden"></div><div style="position:absolute;left:570px;top:550px;width:267px;height:18px;background:linear-gradient(to bottom,#66d8d8,#3b7373 94%,#2f5f5f 94%);overflow:hidden"></div><div style="position:absolute;left:589px;top:569px;width:248px;height:18px;background:linear-gradient(to bottom,#66d8d8,#3b7373 94%,#2f5f5f 94%);overflow:hidden"></div><div style="position:absolute;left:890px;top:531px;width:268px;height:18px;background:linear-gradient(to bottom,#66d8d8,#3b7373 94%,#2f5f5f 94%);overflow:hidden"></div><div style="position:absolute;left:905px;top:550px;width:253px;height:18px;background:linear-gradient(to bottom,#66d8d8,#3b7373 94%,#2f5f5f 94%);overflow:hidden"></div><div style="position:absolute;left:920px;top:569px;width:239px;height:18px;background:linear-gradient(to bottom,#66d8d8,#3b7373 94%,#2f5f5f 94%);overflow:hidden"></div><div style="position:absolute;left:542px;top:609px;width:296px;height:18px;background:linear-gradient(to bottom,#66d8d8,#3b7373 94%,#2f5f5f 94%);overflow:hidden"></div><div style="position:absolute;left:890px;top:629px;width:268px;height:18px;background:linear-gradient(to bottom,#66d8d8,#3b7373 94%,#2f5f5f 94%);overflow:hidden"></div><div style="position:absolute;left:570px;top:649px;width:267px;height:18px;background:linear-gradient(to bottom,#66d8d8,#3b7373 94%,#2f5f5f 94%);overflow:hidden"></div><div style="position:absolute;left:905px;top:669px;width:253px;height:18px;background:linear-gradient(to bottom,#66d8d8,#3b7373 94%,#2f5f5f 94%);overflow:hidden"></div><div style="position:absolute;left:589px;top:689px;width:248px;height:18px;background:linear-gradient(to bottom,#66d8d8,#3b7373 94%,#2f5f5f 94%);overflow:hidden"></div><div style="position:absolute;left:920px;top:709px;width:239px;height:18px;background:linear-gradient(to bottom,#66d8d8,#3b7373 94%,#2f5f5f 94%);overflow:hidden"></div><div style="position:absolute;left:3px;top:754px;width:135px;height:24px;border:1px solid #c0c0c0;border-radius:0 9px 9px 0;box-shadow:inset 1px 1px 0 #fff"></div><div style="position:absolute;left:9px;top:757px;width:2px;height:2px;background:linear-gradient(135deg,transparent 0 45%,#a0a0a0 45%)"></div><div style="position:absolute;left:9px;top:761px;width:2px;height:2px;background:linear-gradient(135deg,transparent 0 45%,#a0a0a0 45%)"></div><div style="position:absolute;left:9px;top:765px;width:2px;height:2px;background:linear-gradient(135deg,transparent 0 45%,#a0a0a0 45%)"></div><div style="position:absolute;left:9px;top:769px;width:2px;height:2px;background:linear-gradient(135deg,transparent 0 45%,#a0a0a0 45%)"></div><div style="position:absolute;left:9px;top:773px;width:2px;height:2px;background:linear-gradient(135deg,transparent 0 45%,#a0a0a0 45%)"></div><div style="position:absolute;left:9px;top:777px;width:2px;height:2px;background:linear-gradient(135deg,transparent 0 45%,#a0a0a0 45%)"></div><svg style="position:absolute;left:23px;top:763px" width="9" height="9" viewBox="0 0 9 9"><rect x="2.5" y="0.5" width="6" height="4" fill="#f0f0f0" stroke="#5a5046"/><rect x="0.5" y="3.5" width="6" height="5" fill="#f0f0f0" stroke="#5a5046" stroke-width="1"/><path d="M1 4h5" stroke="#5a5046" stroke-width="1"/></svg><svg style="position:absolute;left:42px;top:760px" width="18" height="16" viewBox="0 0 18 16"><defs><linearGradient id="gwb" x1="0" y1="0" x2="1" y2="0"><stop offset="0" stop-color="#3a7bd0"/><stop offset="1" stop-color="#e8f0fa"/></linearGradient></defs><rect x="0.5" y="1.5" width="15" height="11" fill="#e6f4fc" stroke="#a88e58"/><rect x="0" y="1" width="16" height="2" fill="url(#gwb)"/><rect x="8.5" y="6.5" width="8" height="8" fill="#f4f4f4" stroke="#7a7a7a"/><path d="M10.5 13v-2M12.5 13v-4M14.5 13v-3" stroke="#2a9a2a" stroke-width="1.2"/></svg><svg style="position:absolute;left:65px;top:760px" width="18" height="16" viewBox="0 0 18 16"><defs><linearGradient id="gwb" x1="0" y1="0" x2="1" y2="0"><stop offset="0" stop-color="#3a7bd0"/><stop offset="1" stop-color="#e8f0fa"/></linearGradient></defs><rect x="0.5" y="1.5" width="15" height="11" fill="#e6f4fc" stroke="#a88e58"/><rect x="0" y="1" width="16" height="2" fill="url(#gwb)"/><circle cx="11" cy="10" r="3.3" fill="#dfeaf6" stroke="#5a82b8" stroke-width="1.4"/><path d="M13.5 12.5l2.5 2.5" stroke="#3a6aa8" stroke-width="1.6"/></svg><svg style="position:absolute;left:88px;top:760px" width="18" height="16" viewBox="0 0 18 16"><defs><linearGradient id="gwb" x1="0" y1="0" x2="1" y2="0"><stop offset="0" stop-color="#3a7bd0"/><stop offset="1" stop-color="#e8f0fa"/></linearGradient></defs><rect x="0.5" y="1.5" width="15" height="11" fill="#e6f4fc" stroke="#a88e58"/><rect x="0" y="1" width="16" height="2" fill="url(#gwb)"/><rect x="8.5" y="6.5" width="8" height="8" fill="#f4f4f4" stroke="#7a7a7a"/><path d="M11.5 8.5v5M14 8.5v5" stroke="#2a9a2a" stroke-width="1.3"/><path d="M11.5 8.5v2.5M14 8.5v2.5" stroke="#3a6ad0" stroke-width="1.3"/></svg><svg style="position:absolute;left:112px;top:759px" width="16" height="16" viewBox="0 0 16 16"><rect x="1" y="1" width="13" height="10" rx="1" fill="#2a5cb0"/><rect x="3" y="3" width="9" height="6" fill="#eaf2fc"/><path d="M4.5 5h5M4.5 7h6" stroke="#2a5cb0" stroke-width="0.9"/><rect x="6" y="11" width="3" height="2" fill="#2a5cb0"/><rect x="3" y="13" width="9" height="2" fill="#2a5cb0"/></svg><div style="position:absolute;left:8px;top:1px;height:20px;line-height:20px;font-family:'Liberation Sans', sans-serif;font-size:12px;color:#000;letter-spacing:-0.211px;-webkit-text-stroke:0.2px #000;white-space:pre">File</div><div style="position:absolute;left:40px;top:1px;height:20px;line-height:20px;font-family:'Liberation Sans', sans-serif;font-size:12px;color:#000;letter-spacing:-0.074px;-webkit-text-stroke:0.2px #000;white-space:pre">View</div><div style="position:absolute;left:79px;top:1px;height:20px;line-height:20px;font-family:'Liberation Sans', sans-serif;font-size:12px;color:#000;letter-spacing:-0.339px;-webkit-text-stroke:0.2px #000;white-space:pre">Run</div><div style="position:absolute;left:114px;top:1px;height:20px;line-height:20px;font-family:'Liberation Sans', sans-serif;font-size:12px;color:#000;letter-spacing:0.203px;-webkit-text-stroke:0.2px #000;white-space:pre">Help</div><div style="position:absolute;left:29px;top:50px;height:20px;line-height:20px;font-family:'Liberation Sans', sans-serif;font-size:12px;color:#1a1a40;letter-spacing:-0.198px;-webkit-text-stroke:0.2px #1a1a40;white-space:pre">*output_20023</div><div style="position:absolute;left:208px;top:73px;width:1032px;height:20px;overflow:hidden"><div style="position:absolute;left:4px;top:-2px;height:20px;line-height:20px;font-family:'Liberation Sans', sans-serif;font-size:11px;color:#000;letter-spacing:-0.228px;-webkit-text-stroke:0.2px #000;white-space:pre">1.856 s</div></div><div style="position:absolute;left:208px;top:73px;width:1032px;height:20px;overflow:hidden"><div style="position:absolute;left:96px;top:-2px;height:20px;line-height:20px;font-family:'Liberation Sans', sans-serif;font-size:11px;color:#000;letter-spacing:-0.228px;-webkit-text-stroke:0.2px #000;white-space:pre">1.857 s</div></div><div style="position:absolute;left:208px;top:73px;width:1032px;height:20px;overflow:hidden"><div style="position:absolute;left:188px;top:-2px;height:20px;line-height:20px;font-family:'Liberation Sans', sans-serif;font-size:11px;color:#000;letter-spacing:-0.228px;-webkit-text-stroke:0.2px #000;white-space:pre">1.858 s</div></div><div style="position:absolute;left:208px;top:73px;width:1032px;height:20px;overflow:hidden"><div style="position:absolute;left:281px;top:-2px;height:20px;line-height:20px;font-family:'Liberation Sans', sans-serif;font-size:11px;color:#000;letter-spacing:-0.228px;-webkit-text-stroke:0.2px #000;white-space:pre">1.859 s</div></div><div style="position:absolute;left:208px;top:73px;width:1032px;height:20px;overflow:hidden"><div style="position:absolute;left:376px;top:-2px;height:20px;line-height:20px;font-family:'Liberation Sans', sans-serif;font-size:11px;color:#000;letter-spacing:-0.161px;-webkit-text-stroke:0.2px #000;white-space:pre">1.86 s</div></div><div style="position:absolute;left:208px;top:73px;width:1032px;height:20px;overflow:hidden"><div style="position:absolute;left:465px;top:-2px;height:20px;line-height:20px;font-family:'Liberation Sans', sans-serif;font-size:11px;color:#000;letter-spacing:-0.228px;-webkit-text-stroke:0.2px #000;white-space:pre">1.861 s</div></div><div style="position:absolute;left:208px;top:73px;width:1032px;height:20px;overflow:hidden"><div style="position:absolute;left:558px;top:-2px;height:20px;line-height:20px;font-family:'Liberation Sans', sans-serif;font-size:11px;color:#000;letter-spacing:-0.228px;-webkit-text-stroke:0.2px #000;white-space:pre">1.862 s</div></div><div style="position:absolute;left:208px;top:73px;width:1032px;height:20px;overflow:hidden"><div style="position:absolute;left:650px;top:-2px;height:20px;line-height:20px;font-family:'Liberation Sans', sans-serif;font-size:11px;color:#000;letter-spacing:-0.228px;-webkit-text-stroke:0.2px #000;white-space:pre">1.863 s</div></div><div style="position:absolute;left:208px;top:73px;width:1032px;height:20px;overflow:hidden"><div style="position:absolute;left:742px;top:-2px;height:20px;line-height:20px;font-family:'Liberation Sans', sans-serif;font-size:11px;color:#000;letter-spacing:-0.228px;-webkit-text-stroke:0.2px #000;white-space:pre">1.864 s</div></div><div style="position:absolute;left:208px;top:73px;width:1032px;height:20px;overflow:hidden"><div style="position:absolute;left:834px;top:-2px;height:20px;line-height:20px;font-family:'Liberation Sans', sans-serif;font-size:11px;color:#000;letter-spacing:-0.228px;-webkit-text-stroke:0.2px #000;white-space:pre">1.865 s</div></div><div style="position:absolute;left:208px;top:73px;width:1032px;height:20px;overflow:hidden"><div style="position:absolute;left:927px;top:-2px;height:20px;line-height:20px;font-family:'Liberation Sans', sans-serif;font-size:11px;color:#000;letter-spacing:-0.228px;-webkit-text-stroke:0.2px #000;white-space:pre">1.866 s</div></div><div style="position:absolute;left:208px;top:73px;width:1032px;height:20px;overflow:hidden"><div style="position:absolute;left:1019px;top:-2px;height:20px;line-height:20px;font-family:'Liberation Sans', sans-serif;font-size:11px;color:#000;letter-spacing:-0.228px;-webkit-text-stroke:0.2px #000;white-space:pre">1.867 s</div></div><div style="position:absolute;left:30px;top:94px;height:20px;line-height:20px;font-family:'Liberation Sans', sans-serif;font-size:11px;color:#000;letter-spacing:-0.222px;-webkit-text-stroke:0.2px #000;white-space:pre">Process 20023</div><div style="position:absolute;left:46px;top:114px;height:20px;line-height:20px;font-family:'Liberation Sans', sans-serif;font-size:11px;color:#000;letter-spacing:-0.057px;-webkit-text-stroke:0.2px #000;white-space:pre">Thread 80144192</div><div style="position:absolute;left:62px;top:134px;height:20px;line-height:20px;font-family:'Liberation Sans', sans-serif;font-size:11px;color:#000;letter-spacing:0.078px;-webkit-text-stroke:0.2px #000;white-space:pre">Runtime API</div><div style="position:absolute;left:62px;top:154px;height:20px;line-height:20px;font-family:'Liberation Sans', sans-serif;font-size:11px;color:#000;letter-spacing:-0.052px;-webkit-text-stroke:0.2px #000;white-space:pre">Driver API</div><div style="position:absolute;left:46px;top:174px;height:20px;line-height:20px;font-family:'Liberation Sans', sans-serif;font-size:11px;color:#000;letter-spacing:0.327px;-webkit-text-stroke:0.2px #000;white-space:pre">Profiling Overhead</div><div style="position:absolute;left:30px;top:194px;height:20px;line-height:20px;font-family:'Liberation Sans', sans-serif;font-size:11px;color:#000;letter-spacing:-0.222px;-webkit-text-stroke:0.2px #000;white-space:pre">Process 20024</div><div style="position:absolute;left:46px;top:214px;height:20px;line-height:20px;font-family:'Liberation Sans', sans-serif;font-size:11px;color:#000;letter-spacing:-0.057px;-webkit-text-stroke:0.2px #000;white-space:pre">Thread 80144192</div><div style="position:absolute;left:62px;top:234px;height:20px;line-height:20px;font-family:'Liberation Sans', sans-serif;font-size:11px;color:#000;letter-spacing:0.078px;-webkit-text-stroke:0.2px #000;white-space:pre">Runtime API</div><div style="position:absolute;left:62px;top:254px;height:20px;line-height:20px;font-family:'Liberation Sans', sans-serif;font-size:11px;color:#000;letter-spacing:-0.052px;-webkit-text-stroke:0.2px #000;white-space:pre">Driver API</div><div style="position:absolute;left:46px;top:274px;height:20px;line-height:20px;font-family:'Liberation Sans', sans-serif;font-size:11px;color:#000;letter-spacing:0.327px;-webkit-text-stroke:0.2px #000;white-space:pre">Profiling Overhead</div><div style="position:absolute;left:30px;top:294px;height:20px;line-height:20px;font-family:'Liberation Sans', sans-serif;font-size:11px;color:#000;letter-spacing:-0.222px;-webkit-text-stroke:0.2px #000;white-space:pre">Process 20025</div><div style="position:absolute;left:46px;top:314px;height:20px;line-height:20px;font-family:'Liberation Sans', sans-serif;font-size:11px;color:#000;letter-spacing:-0.057px;-webkit-text-stroke:0.2px #000;white-space:pre">Thread 80144192</div><div style="position:absolute;left:62px;top:334px;height:20px;line-height:20px;font-family:'Liberation Sans', sans-serif;font-size:11px;color:#000;letter-spacing:0.078px;-webkit-text-stroke:0.2px #000;white-space:pre">Runtime API</div><div style="position:absolute;left:62px;top:354px;height:20px;line-height:20px;font-family:'Liberation Sans', sans-serif;font-size:11px;color:#000;letter-spacing:-0.052px;-webkit-text-stroke:0.2px #000;white-space:pre">Driver API</div><div style="position:absolute;left:46px;top:374px;height:20px;line-height:20px;font-family:'Liberation Sans', sans-serif;font-size:11px;color:#000;letter-spacing:0.327px;-webkit-text-stroke:0.2px #000;white-space:pre">Profiling Overhead</div><div style="position:absolute;left:30px;top:394px;height:20px;line-height:20px;font-family:'Liberation Sans', sans-serif;font-size:11px;color:#000;letter-spacing:-0.208px;-webkit-text-stroke:0.2px #000;white-space:pre">[0] Tesla K20c</div><div style="position:absolute;left:46px;top:414px;height:20px;line-height:20px;font-family:'Liberation Sans', sans-serif;font-size:11px;color:#000;letter-spacing:-0.131px;-webkit-text-stroke:0.2px #000;white-space:pre">Context MPS (CUDA)</div><div style="position:absolute;left:78px;top:434px;height:20px;line-height:20px;font-family:'Liberation Sans', sans-serif;font-size:11px;color:#000;letter-spacing:0.042px;-webkit-text-stroke:0.2px #000;white-space:pre">MemCpy (HtoD)</div><div style="position:absolute;left:78px;top:454px;height:20px;line-height:20px;font-family:'Liberation Sans', sans-serif;font-size:11px;color:#000;letter-spacing:0.042px;-webkit-text-stroke:0.2px #000;white-space:pre">MemCpy (DtoH)</div><div style="position:absolute;left:62px;top:492px;height:20px;line-height:20px;font-family:'Liberation Sans', sans-serif;font-size:11px;color:#000;letter-spacing:0.337px;-webkit-text-stroke:0.2px #000;white-space:pre">Compute</div><div style="position:absolute;left:94px;top:549px;height:20px;line-height:20px;font-family:'Liberation Sans', sans-serif;font-size:11px;color:#000;letter-spacing:0.158px;-webkit-text-stroke:0.2px #000;white-space:pre">100.0% kernel(int v...</div><div style="position:absolute;left:62px;top:588px;height:20px;line-height:20px;font-family:'Liberation Sans', sans-serif;font-size:11px;color:#000;letter-spacing:-0.138px;-webkit-text-stroke:0.2px #000;white-space:pre">Streams</div><div style="position:absolute;left:78px;top:608px;height:20px;line-height:20px;font-family:'Liberation Sans', sans-serif;font-size:11px;color:#000;letter-spacing:-0.099px;-webkit-text-stroke:0.2px #000;white-space:pre">Stream 6-20023</div><div style="position:absolute;left:78px;top:628px;height:20px;line-height:20px;font-family:'Liberation Sans', sans-serif;font-size:11px;color:#000;letter-spacing:-0.067px;-webkit-text-stroke:0.2px #000;white-space:pre">Stream 12-20023</div><div style="position:absolute;left:78px;top:648px;height:20px;line-height:20px;font-family:'Liberation Sans', sans-serif;font-size:11px;color:#000;letter-spacing:-0.099px;-webkit-text-stroke:0.2px #000;white-space:pre">Stream 6-20024</div><div style="position:absolute;left:78px;top:668px;height:20px;line-height:20px;font-family:'Liberation Sans', sans-serif;font-size:11px;color:#000;letter-spacing:-0.067px;-webkit-text-stroke:0.2px #000;white-space:pre">Stream 12-20024</div><div style="position:absolute;left:78px;top:688px;height:20px;line-height:20px;font-family:'Liberation Sans', sans-serif;font-size:11px;color:#000;letter-spacing:-0.099px;-webkit-text-stroke:0.2px #000;white-space:pre">Stream 6-20025</div><div style="position:absolute;left:78px;top:708px;height:20px;line-height:20px;font-family:'Liberation Sans', sans-serif;font-size:11px;color:#000;letter-spacing:-0.067px;-webkit-text-stroke:0.2px #000;white-space:pre">Stream 12-20025</div><div style="position:absolute;left:216px;top:235px;width:108px;height:20px;line-height:20px;text-align:center;font-family:'Liberation Sans', sans-serif;font-size:11px;color:#ffffff;letter-spacing:0.266px;-webkit-text-stroke:0.2px #ffffff;white-space:pre;overflow:hidden">cudaDeviceSynch...</div><div style="position:absolute;left:223px;top:335px;width:60px;height:20px;line-height:20px;text-align:center;font-family:'Liberation Sans', sans-serif;font-size:11px;color:#ffffff;letter-spacing:0.212px;-webkit-text-stroke:0.2px #ffffff;white-space:pre;overflow:hidden">cudaDe...</div><div style="position:absolute;left:542px;top:475px;width:296px;height:20px;line-height:20px;text-align:center;font-family:'Liberation Sans', sans-serif;font-size:11px;color:#ffffff;letter-spacing:0.440px;-webkit-text-stroke:0.2px #ffffff;white-space:pre;overflow:hidden">kernel(int volatile *, int, int, int)</div><div style="position:absolute;left:570px;top:493px;width:267px;height:20px;line-height:20px;text-align:center;font-family:'Liberation Sans', sans-serif;font-size:11px;color:#ffffff;letter-spacing:0.440px;-webkit-text-stroke:0.2px #ffffff;white-space:pre;overflow:hidden">kernel(int volatile *, int, int, int)</div><div style="position:absolute;left:589px;top:511px;width:248px;height:20px;line-height:20px;text-align:center;font-family:'Liberation Sans', sans-serif;font-size:11px;color:#ffffff;letter-spacing:0.440px;-webkit-text-stroke:0.2px #ffffff;white-space:pre;overflow:hidden">kernel(int volatile *, int, int, int)</div><div style="position:absolute;left:890px;top:475px;width:268px;height:20px;line-height:20px;text-align:center;font-family:'Liberation Sans', sans-serif;font-size:11px;color:#ffffff;letter-spacing:0.440px;-webkit-text-stroke:0.2px #ffffff;white-space:pre;overflow:hidden">kernel(int volatile *, int, int, int)</div><div style="position:absolute;left:905px;top:493px;width:253px;height:20px;line-height:20px;text-align:center;font-family:'Liberation Sans', sans-serif;font-size:11px;color:#ffffff;letter-spacing:0.440px;-webkit-text-stroke:0.2px #ffffff;white-space:pre;overflow:hidden">kernel(int volatile *, int, int, int)</div><div style="position:absolute;left:920px;top:511px;width:239px;height:20px;line-height:20px;text-align:center;font-family:'Liberation Sans', sans-serif;font-size:11px;color:#ffffff;letter-spacing:0.440px;-webkit-text-stroke:0.2px #ffffff;white-space:pre;overflow:hidden">kernel(int volatile *, int, int, int)</div><div style="position:absolute;left:542px;top:531px;width:296px;height:20px;line-height:20px;text-align:center;font-family:'Liberation Sans', sans-serif;font-size:11px;color:#ffffff;letter-spacing:0.440px;-webkit-text-stroke:0.2px #ffffff;white-space:pre;overflow:hidden">kernel(int volatile *, int, int, int)</div><div style="position:absolute;left:570px;top:550px;width:267px;height:20px;line-height:20px;text-align:center;font-family:'Liberation Sans', sans-serif;font-size:11px;color:#ffffff;letter-spacing:0.440px;-webkit-text-stroke:0.2px #ffffff;white-space:pre;overflow:hidden">kernel(int volatile *, int, int, int)</div><div style="position:absolute;left:589px;top:569px;width:248px;height:20px;line-height:20px;text-align:center;font-family:'Liberation Sans', sans-serif;font-size:11px;color:#ffffff;letter-spacing:0.440px;-webkit-text-stroke:0.2px #ffffff;white-space:pre;overflow:hidden">kernel(int volatile *, int, int, int)</div><div style="position:absolute;left:890px;top:531px;width:268px;height:20px;line-height:20px;text-align:center;font-family:'Liberation Sans', sans-serif;font-size:11px;color:#ffffff;letter-spacing:0.440px;-webkit-text-stroke:0.2px #ffffff;white-space:pre;overflow:hidden">kernel(int volatile *, int, int, int)</div><div style="position:absolute;left:905px;top:550px;width:253px;height:20px;line-height:20px;text-align:center;font-family:'Liberation Sans', sans-serif;font-size:11px;color:#ffffff;letter-spacing:0.440px;-webkit-text-stroke:0.2px #ffffff;white-space:pre;overflow:hidden">kernel(int volatile *, int, int, int)</div><div style="position:absolute;left:920px;top:569px;width:239px;height:20px;line-height:20px;text-align:center;font-family:'Liberation Sans', sans-serif;font-size:11px;color:#ffffff;letter-spacing:0.440px;-webkit-text-stroke:0.2px #ffffff;white-space:pre;overflow:hidden">kernel(int volatile *, int, int, int)</div><div style="position:absolute;left:542px;top:609px;width:296px;height:20px;line-height:20px;text-align:center;font-family:'Liberation Sans', sans-serif;font-size:11px;color:#ffffff;letter-spacing:0.440px;-webkit-text-stroke:0.2px #ffffff;white-space:pre;overflow:hidden">kernel(int volatile *, int, int, int)</div><div style="position:absolute;left:890px;top:629px;width:268px;height:20px;line-height:20px;text-align:center;font-family:'Liberation Sans', sans-serif;font-size:11px;color:#ffffff;letter-spacing:0.440px;-webkit-text-stroke:0.2px #ffffff;white-space:pre;overflow:hidden">kernel(int volatile *, int, int, int)</div><div style="position:absolute;left:570px;top:649px;width:267px;height:20px;line-height:20px;text-align:center;font-family:'Liberation Sans', sans-serif;font-size:11px;color:#ffffff;letter-spacing:0.440px;-webkit-text-stroke:0.2px #ffffff;white-space:pre;overflow:hidden">kernel(int volatile *, int, int, int)</div><div style="position:absolute;left:905px;top:669px;width:253px;height:20px;line-height:20px;text-align:center;font-family:'Liberation Sans', sans-serif;font-size:11px;color:#ffffff;letter-spacing:0.440px;-webkit-text-stroke:0.2px #ffffff;white-space:pre;overflow:hidden">kernel(int volatile *, int, int, int)</div><div style="position:absolute;left:589px;top:689px;width:248px;height:20px;line-height:20px;text-align:center;font-family:'Liberation Sans', sans-serif;font-size:11px;color:#ffffff;letter-spacing:0.440px;-webkit-text-stroke:0.2px #ffffff;white-space:pre;overflow:hidden">kernel(int volatile *, int, int, int)</div><div style="position:absolute;left:920px;top:709px;width:239px;height:20px;line-height:20px;text-align:center;font-family:'Liberation Sans', sans-serif;font-size:11px;color:#ffffff;letter-spacing:0.440px;-webkit-text-stroke:0.2px #ffffff;white-space:pre;overflow:hidden">kernel(int volatile *, int, int, int)</div></body></html>
